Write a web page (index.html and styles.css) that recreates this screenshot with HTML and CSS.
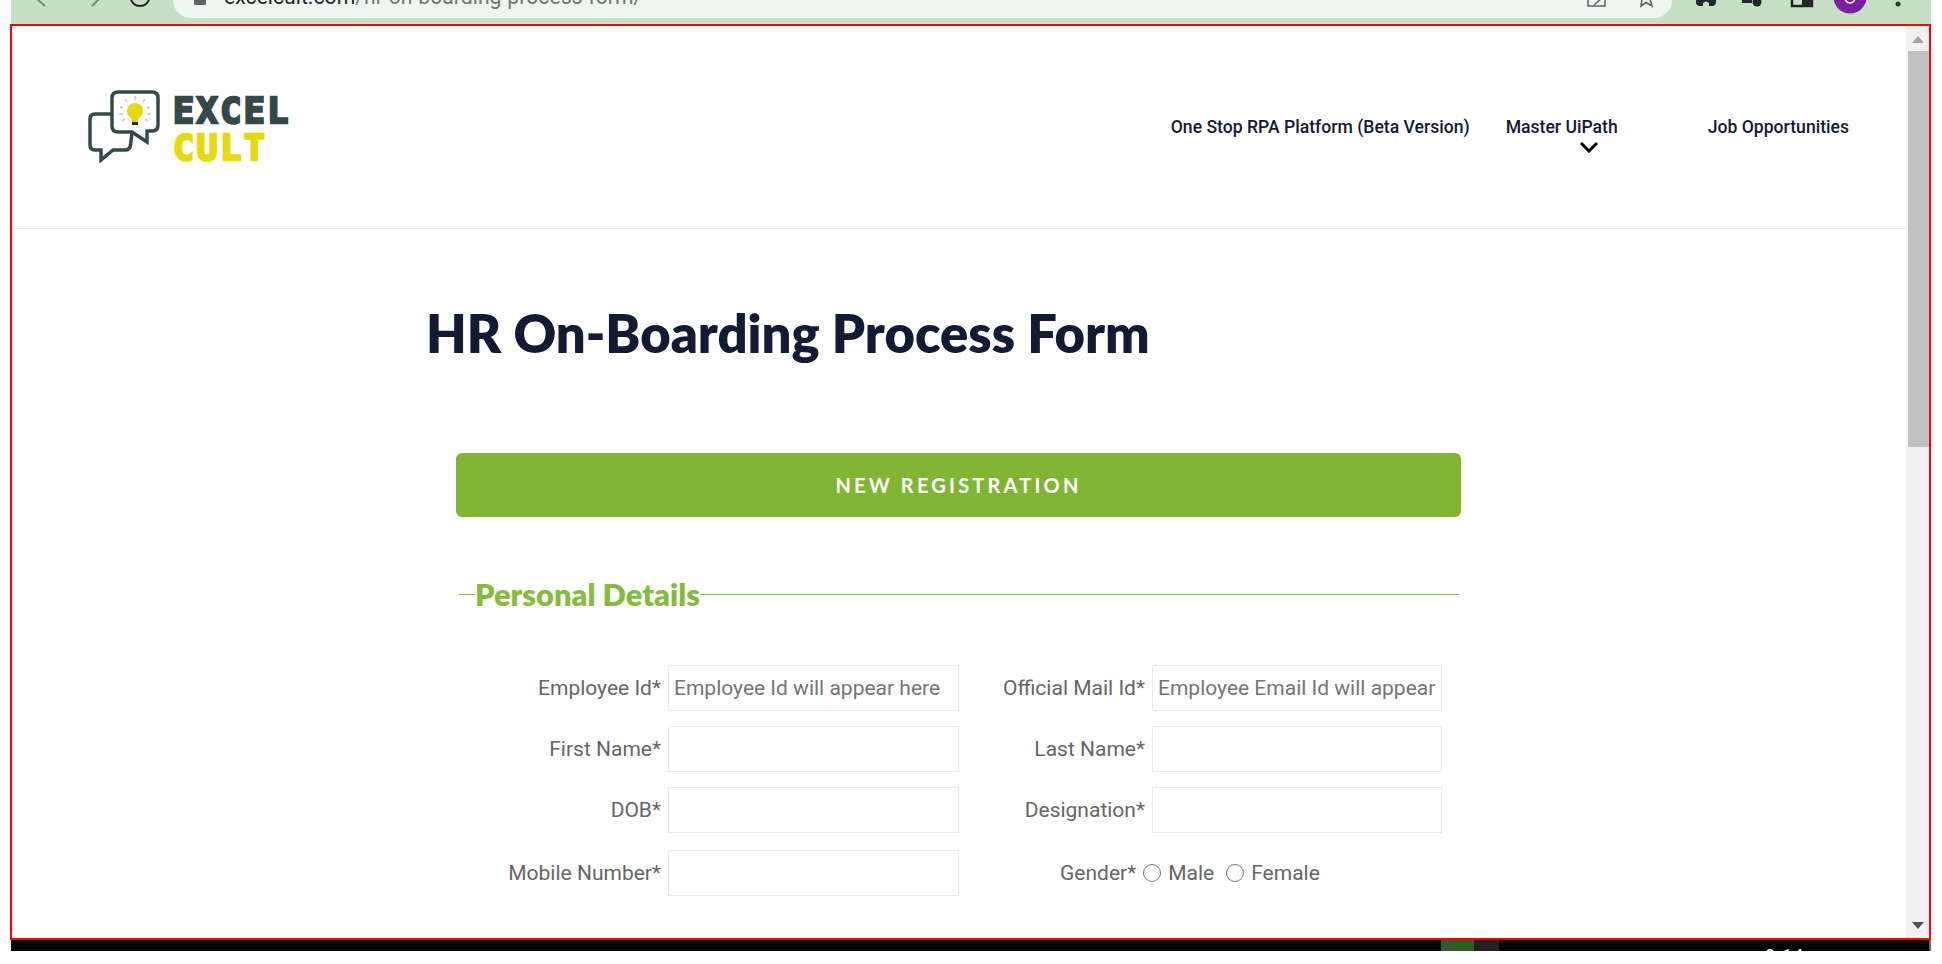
FILE: index.html
```html
<!DOCTYPE html>
<html lang="en">
<head>
    <meta charset="UTF-8">
    <meta name="viewport" content="width=device-width, initial-scale=1.0">
    <title>HR On-Boarding Process Form</title>
    <link rel="stylesheet" href="styles.css">
</head>
<body>
    <div class="screen">
        <div class="toolbar">
            <svg class="toolbar-left" width="162" height="24" viewBox="0 0 162 24">
                <path d="M25 -2L34 6" fill="none" stroke="#7d8c80" stroke-width="2"/>
                <path d="M89 -2L81 6" fill="none" stroke="#7d8c80" stroke-width="2"/>
                <path d="M120 -2A9 8 0 0 0 138 -2" fill="none" stroke="#222" stroke-width="2"/>
            </svg>
            <div class="omnibox">
                <svg class="lock" width="12" height="18" viewBox="0 0 12 18"><rect x="0" y="-6" width="12" height="11" rx="1" fill="#5f6368"/></svg>
                <span class="url"><span class="url-host">excelcult.com</span>/hr-on-boarding-process-form/</span>
            </div>
            <svg class="toolbar-right" width="259" height="24" viewBox="0 0 259 24">
                <path d="M-84 -6V6H-67V-6" fill="none" stroke="#5f6368" stroke-width="1.5"/>
                <path d="M-78 5L-69 -3" fill="none" stroke="#5f6368" stroke-width="1.5"/>
                <path d="M-26 -4L-22 -1L-20 6L-26 2.5L-31 6L-30 -1Z" fill="none" stroke="#5f6368" stroke-width="1.6"/>
                <path d="M24 -4H44V2Q44 6 40 6H37V3Q34 0 31 3V6H28Q24 6 24 2Z" fill="#20262b"/>
                <path d="M70 -3H80V3H70Z" fill="#20262b"/>
                <circle cx="85" cy="2" r="4.500" fill="#20262b"/>
                <path d="M120 -4V6H140V-4" fill="none" stroke="#20262b" stroke-width="2.500"/>
                <path d="M130 -4H139V5H130Z" fill="#20262b"/>
                <circle cx="178" cy="-3" r="16.500" fill="#7b1fa2"/>
                <path d="M173 -2A5 5 0 0 0 183 -2" fill="none" stroke="#fff" stroke-width="1.500"/>
                <circle cx="226" cy="4" r="2.500" fill="#2f3633"/>
            </svg>
        </div>
        <div class="frame">
            <div class="page">
                <header class="site-header">
                    <a class="logo" href="#">
                        <svg class="logo-icon" width="76" height="76" viewBox="0 0 76 76">
                            <path d="M26 27H9Q4 27 4 32V58Q4 63 9 63H15V73L27 63H39Q44 63 44.500 58L46 46" fill="none" stroke="#34494a" stroke-width="3.500"/>
                            <path d="M32 5H66Q72 5 72 11V38Q72 44 66 44H61V55L46 45H32Q26 45 26 39V11Q26 5 32 5Z" fill="#fff" stroke="#34494a" stroke-width="3.500"/>
                            <circle cx="49" cy="24" r="8" fill="#e6da0e"/>
                            <path d="M45 29H53L52 35H46Z" fill="#e6da0e"/>
                            <path d="M46 35H52V38H46Z" fill="#2b2b2b"/>
                            <path d="M49 9V13M39 12L41 15M59 12L57 15M34 20L37 21M64 20L61 21M33 27H37M65 27H61M36 34L39 32M62 34L59 32" fill="none" stroke="#aaa" stroke-width="1"/>
                        </svg>
                        <span class="logo-text">
                            <span class="logo-excel">EXCEL</span>
                            <span class="logo-cult">CULT</span>
                        </span>
                    </a>
                    <nav class="nav">
                        <a class="nav-item" href="#">One Stop RPA Platform (Beta Version)</a>
                        <a class="nav-item nav-master" href="#">Master UiPath
                            <svg class="chevron" width="20" height="12" viewBox="0 0 20 12"><path d="M2 2L10 10L18 2" fill="none" stroke="#000" stroke-width="3"/></svg>
                        </a>
                        <a class="nav-item nav-jobs" href="#">Job Opportunities</a>
                    </nav>
                </header>
                <main class="content">
                    <h1 class="page-title">HR On-Boarding Process Form</h1>
                    <form class="reg-form">
                        <button type="button" class="new-btn">NEW REGISTRATION</button>
                        <div class="section-title">
                            <span class="section-line section-line-short"></span>
                            <h2>Personal Details</h2>
                            <span class="section-line"></span>
                        </div>
                        <div class="fields">
                            <label class="field-label" for="emp">Employee Id*</label>
                            <input class="field-input" id="emp" type="text" placeholder="Employee Id will appear here">
                            <label class="field-label" for="mail">Official Mail Id*</label>
                            <input class="field-input" id="mail" type="text" placeholder="Employee Email Id will appear">
                            <label class="field-label" for="first">First Name*</label>
                            <input class="field-input" id="first" type="text">
                            <label class="field-label" for="last">Last Name*</label>
                            <input class="field-input" id="last" type="text">
                            <label class="field-label" for="dob">DOB*</label>
                            <input class="field-input" id="dob" type="text">
                            <label class="field-label" for="desig">Designation*</label>
                            <input class="field-input" id="desig" type="text">
                            <label class="field-label row-last" for="mobile">Mobile Number*</label>
                            <input class="field-input row-last" id="mobile" type="text">
                            <div class="gender row-last">
                                <span>Gender*</span>
                                <label class="radio"><input type="radio" name="gender"> Male</label>
                                <label class="radio"><input type="radio" name="gender"> Female</label>
                            </div>
                        </div>
                    </form>
                </main>
            </div>
            <div class="scrollbar">
                <span class="arrow-up"></span>
                <span class="thumb"></span>
                <span class="arrow-down"></span>
            </div>
        </div>
        <div class="taskbar">
            <span class="task task-green"></span>
            <span class="task task-dark"></span>
            <span class="clock">8:14 PM</span>
            <span class="task-edge"></span>
        </div>
    </div>
</body>
</html>
```
FILE: styles.css
```css
* {
    box-sizing: border-box;
}
html, body {
    margin: 0;
    height: 100%;
    overflow: hidden;
    background: #fff;
}
body {
    font-family: Roboto, sans-serif;
}
.screen {
    width: 1921px;
    height: 951px;
    margin-left: 10px;
    display: flex;
    flex-direction: column;
}

/* browser bar, cut off at the top of the shot */
.toolbar {
    flex: 0 0 24px;
    display: flex;
    align-items: flex-start;
    margin-left: 1px;
    background: #c5e0c4;
    overflow: hidden;
}
.toolbar svg {
    overflow: visible;
    flex: none;
}
.toolbar-left {
    width: 162px;
}
.omnibox {
    flex: 0 0 1499px;
    height: 18px;
    display: flex;
    align-items: flex-start;
    padding-left: 21px;
    background: #eef6ef;
    border-radius: 0 0 20px 20px;
    overflow: hidden;
}
.url {
    margin-left: 18px;
    margin-top: -15px;
    font-size: 21.200px;
    line-height: 24px;
    color: #6d7873;
    white-space: nowrap;
}
.url-host {
    color: #20262b;
}

/* the captured page */
.frame {
    flex: 0 0 916px;
    display: flex;
    border: 2px solid #f00;
}
.page {
    flex: 1;
    min-width: 0;
    background: #fff;
}
.site-header {
    height: 203px;
    display: flex;
    align-items: center;
    justify-content: space-between;
    padding: 0 57px 0 74px;
    border-bottom: 1px solid #e9ebf2;
}
.logo {
    display: flex;
    align-items: center;
    gap: 11px;
    text-decoration: none;
}
.logo-icon {
    margin-bottom: 4px;
}
.logo-text {
    display: flex;
    flex-direction: column;
    margin-top: 6px;
    font-family: "DejaVu Sans Mono", monospace;
    font-weight: 700;
    font-size: 35px;
    line-height: 37px;
    letter-spacing: 2.500px;
    -webkit-text-stroke: 2.500px currentColor;
}
.logo-excel {
    color: #34494a;
}
.logo-cult {
    color: #e6da0e;
}
.nav {
    display: flex;
    align-items: center;
}
.nav-item {
    position: relative;
    font-weight: 500;
    font-size: 17.600px;
    line-height: 24px;
    color: #131a33;
    text-decoration: none;
    white-space: nowrap;
}
.nav-master {
    margin-left: 36px;
}
.nav-jobs {
    margin-left: 90px;
}
.chevron {
    position: absolute;
    left: 73px;
    top: 26px;
}
.content {
    padding: 62px 0 0 414px;
}
.page-title {
    margin: 0;
    font-family: Lato, sans-serif;
    font-weight: 800;
    font-size: 52.500px;
    line-height: 84px;
    color: #131a33;
}
.reg-form {
    width: 1005px;
    margin: 78px 0 0 30px;
}
.new-btn {
    display: block;
    width: 100%;
    height: 64px;
    border: 0;
    border-radius: 6px;
    background: #83b535;
    color: #fff;
    font-family: Lato, sans-serif;
    font-weight: 700;
    font-size: 20px;
    letter-spacing: 3.200px;
}
.section-title {
    display: flex;
    align-items: center;
    width: 1000px;
    margin: 59px 0 0 3px;
}
.section-title h2 {
    margin: -1px 0 1px;
    font-family: Lato, sans-serif;
    font-weight: 800;
    font-size: 30.800px;
    line-height: 40px;
    color: #85bc3f;
}
.section-line {
    flex: 1;
    height: 1px;
    margin-top: -3px;
    background: #85bc3f;
}
.section-line-short {
    flex: 0 0 16px;
}
.fields {
    display: grid;
    grid-template-columns: 205px 291px 179px 290px;
    grid-auto-rows: 46px;
    column-gap: 7px;
    row-gap: 15px;
    margin-top: 49px;
    font-size: 21px;
    color: #666;
}
.field-label {
    align-self: center;
    text-align: right;
}
.field-input {
    width: 100%;
    height: 100%;
    padding: 0 5px;
    border: 1.500px solid #eaeaf0;
    border-radius: 0;
    font-family: Roboto, sans-serif;
    font-size: 21px;
    color: #666;
    outline: none;
}
.field-input::placeholder {
    color: #757575;
    opacity: 1;
}
.row-last {
    position: relative;
    top: 2px;
}
.gender {
    grid-column: 3 / 5;
    display: flex;
    align-items: center;
    padding-left: 94px;
}
.radio {
    display: flex;
    align-items: center;
    gap: 7px;
    margin-left: 12px;
}
.radio:first-of-type {
    margin-left: 7px;
}
.radio input {
    width: 18px;
    height: 18px;
    margin: 0;
}

/* scrollbar */
.scrollbar {
    flex: 0 0 23px;
    display: flex;
    flex-direction: column;
    align-items: flex-end;
    background: #f1f1f1;
}
.arrow-up {
    align-self: center;
    width: 0;
    height: 0;
    margin: 10px 0 8px;
    border: 6px solid transparent;
    border-top: 0;
    border-bottom: 7px solid #a3a3a3;
}
.thumb {
    width: 21px;
    height: 396px;
    background: #c1c1c1;
}
.arrow-down {
    align-self: center;
    width: 0;
    height: 0;
    margin-top: 475px;
    border: 6px solid transparent;
    border-bottom: 0;
    border-top: 7px solid #505050;
}

/* bit of the desktop taskbar under the window */
.taskbar {
    flex: 0 0 11px;
    display: flex;
    margin-left: 1px;
    background: #050505;
    overflow: hidden;
}
.task-green {
    width: 34px;
    margin-left: 1430px;
    background: #2e5c25;
}
.task-dark {
    width: 27px;
    background: #222;
}
.clock {
    margin: 8px 0 0 266px;
    font-size: 16px;
    line-height: 16px;
    font-weight: 500;
    letter-spacing: 2px;
    color: #fff;
}
.task-edge {
    width: 2px;
    margin-left: 93px;
    background: #666;
}
```
